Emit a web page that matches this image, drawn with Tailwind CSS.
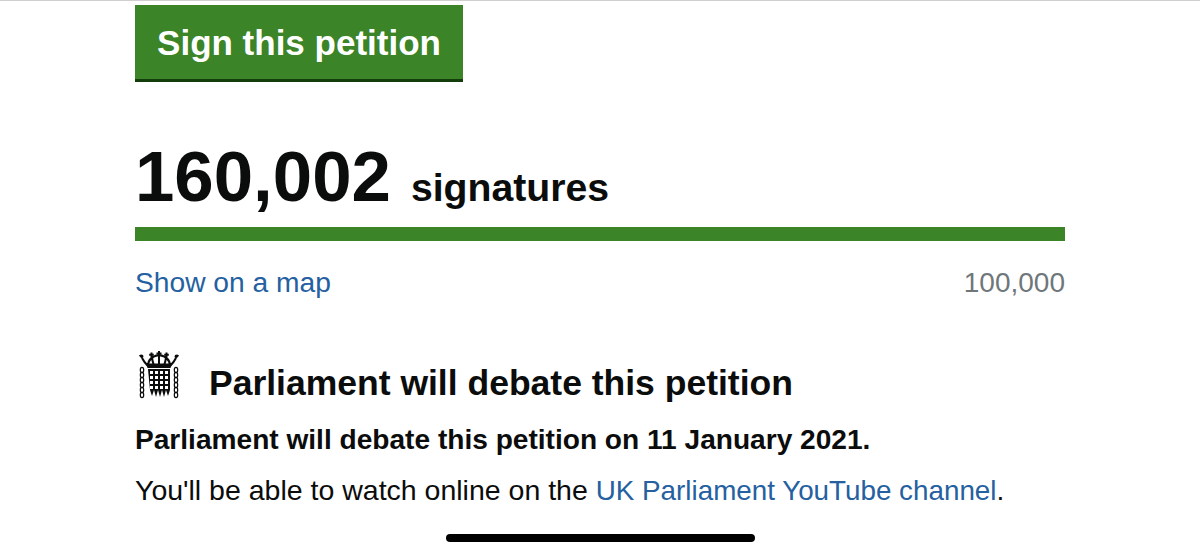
<!DOCTYPE html>
<html><head><meta charset="utf-8"><script src="https://cdn.jsdelivr.net/npm/@tailwindcss/browser@4"></script></head>
<body class="bg-white">
<div class="relative w-[1200px] h-[554px] overflow-hidden bg-white border-t border-[#cfcfcf] font-['Liberation_Sans',Arial,sans-serif] text-[#0b0c0c]">
  <div class="w-[930px] ml-[135px] flex flex-col">
    <div class="mt-[4px] w-[328px] h-[77px] bg-[#3b8427] border-b-[3px] border-[#143d0c] flex items-center justify-center">
      <span class="text-white font-bold text-[35px] leading-none">Sign this petition</span>
    </div>
    <div class="mt-[55px] flex items-baseline h-[80px]">
      <span class="font-bold text-[70.8px] leading-[80px]">160,002</span>
      <span class="font-bold text-[39.2px] leading-[80px] ml-[20px]">signatures</span>
    </div>
    <div class="mt-[10px] h-[14px] bg-[#3b8427]"></div>
    <div class="mt-[24px] flex justify-between items-baseline text-[28.2px] leading-[34px]">
      <a class="text-[#2560a0]">Show on a map</a>
      <span class="text-[#6f777b] text-[28px]">100,000</span>
    </div>
    <div class="mt-[51px] flex items-start h-[52px]">
      <svg class="w-[46px] h-[50px] ml-[2px] shrink-0" viewBox="0 0 46 50" fill="#0b0c0c">
        <g fill="none" stroke="#0b0c0c" stroke-width="2">
          <path d="M5 7C7 11 9 13 11 15M22 4C16 5 11 8 11 15M22 4C28 5 33 8 33 15M39 7C37 11 35 13 33 15M22 4V14M15 5C15 8 16 12 17 15M29 5C29 8 28 12 27 15"/>
        </g>
        <path d="M21 0h2v1.500h1.500v2h-1.500v2h-2v-2h-1.500v-2h1.500zM13.500 1.500h2v1.300h1.300v2h-1.300v1.500h-2v-1.500h-1.300v-2h1.300zM28.500 1.500h2v1.300h1.300v2h-1.300v1.500h-2v-1.500h-1.300v-2h1.300zM4 3.500l2 .5.5 2-1.500 1.500-2-1.500-1-1.800zM40 3.500l-2 .5-.5 2 1.500 1.500 2-1.500 1-1.800z"/>
        <path d="M9 12.500h26l-1.500 4.500h-23z"/>
        <path d="M11 18h22v21l-2 6-2-6-2 7-2-7-2 7-2-7-2 7-2-7-2 6-2-6z"/>
        <g fill="#fff">
          <rect x="13" y="20" width="3" height="3"/><rect x="18" y="20" width="3" height="3"/><rect x="23" y="20" width="3" height="3"/><rect x="28" y="20" width="3" height="3"/>
          <rect x="13" y="25" width="3" height="3"/><rect x="18" y="25" width="3" height="3"/><rect x="23" y="25" width="3" height="3"/><rect x="28" y="25" width="3" height="3"/>
          <rect x="13" y="30" width="3" height="3"/><rect x="18" y="30" width="3" height="3"/><rect x="23" y="30" width="3" height="3"/><rect x="28" y="30" width="3" height="3"/>
          <rect x="13" y="35" width="3" height="3"/><rect x="18" y="35" width="3" height="3"/><rect x="23" y="35" width="3" height="3"/><rect x="28" y="35" width="3" height="3"/>
        </g>
        <g fill="none" stroke="#0b0c0c" stroke-width="1.2">
          <ellipse cx="5" cy="19" rx="1.7" ry="2.6"/><ellipse cx="5" cy="24" rx="1.7" ry="2.6"/><ellipse cx="5" cy="29" rx="1.7" ry="2.6"/><ellipse cx="5" cy="34" rx="1.7" ry="2.6"/><ellipse cx="5" cy="39" rx="1.7" ry="2.6"/><ellipse cx="5" cy="44" rx="1.7" ry="2.6"/>
          <ellipse cx="39" cy="19" rx="1.7" ry="2.6"/><ellipse cx="39" cy="24" rx="1.7" ry="2.6"/><ellipse cx="39" cy="29" rx="1.7" ry="2.6"/><ellipse cx="39" cy="34" rx="1.7" ry="2.6"/><ellipse cx="39" cy="39" rx="1.7" ry="2.6"/><ellipse cx="39" cy="44" rx="1.7" ry="2.6"/>
        </g>
      </svg>
      <h2 class="ml-[26px] mt-[15px] font-bold text-[35.5px] leading-none whitespace-nowrap">Parliament will debate this petition</h2>
    </div>
    <p class="mt-[22px] font-bold text-[28.1px] leading-[30px] whitespace-nowrap">Parliament will debate this petition on 11 January 2021.</p>
    <p class="mt-[19px] text-[28.5px] leading-[32px] whitespace-nowrap">You'll be able to watch online on the <a class="text-[#2560a0] text-[27.8px]">UK Parliament YouTube channel</a><span class="text-[28px]">.</span></p>
  </div>
  <div class="absolute left-[446px] top-[533px] w-[309px] h-[8px] rounded-full bg-black"></div>
</div>
</body></html>
